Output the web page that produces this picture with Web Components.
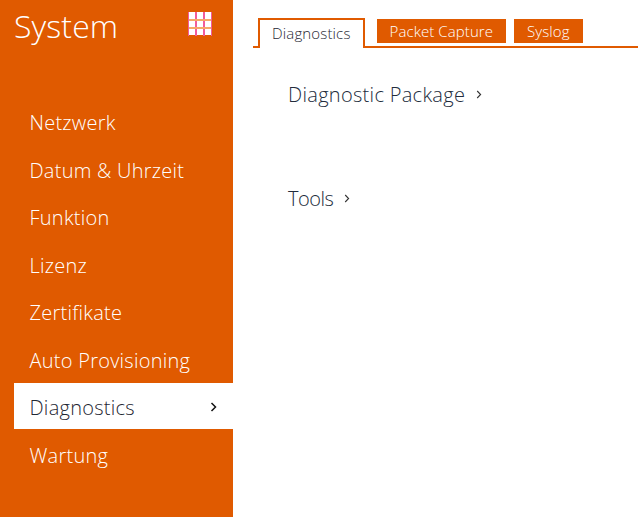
<!DOCTYPE html>
<html><head><meta charset="utf-8"><style>
html,body{margin:0;padding:0;height:100%;background:#fff;overflow:hidden}
body{font-family:"Open Sans","Noto Sans",sans-serif}
</style></head><body>
<template id="t-app"><style>
:host{display:flex;width:638px;height:517px}
main{flex:1;min-width:0;display:flex;flex-direction:column;padding:18px 0 0 20px}
.sections{display:flex;flex-direction:column;gap:80px;padding:34px 0 0 35px}
</style><slot name="side"></slot><main><slot name="tabs"></slot><div class="sections"><slot></slot></div></main></template>

<template id="t-side"><style>
:host{display:flex;flex-direction:column;width:233px;height:517px;background:#e05a00;box-sizing:border-box;padding:0 0 0 14px;color:#fff}
header{display:flex;justify-content:space-between;align-items:flex-start;height:89px;padding-right:21px}
h1{margin:0;font-size:32px;font-weight:300;line-height:40px;padding-top:6px;letter-spacing:.1px}
svg{margin-top:12px;display:block}
nav{display:flex;flex-direction:column;padding-top:10px}
</style><header><h1><slot name="title"></slot></h1>
<svg width="24" height="24" viewBox="0 0 24 24"><path d="M0 0V24M8 0V24M16 0V24M24 0V24" stroke="#f25c9a" stroke-width="2"/><path d="M1 8H23M1 16H23" stroke="#f6a868" stroke-width="2"/><path fill="#fff" d="M1 0h6v7H1zM9 0h6v7H9zM17 0h6v7h-6zM1 9h6v6H1zM9 9h6v6H9zM17 9h6v6h-6zM1 17h6v6H1zM9 17h6v6H9zM17 17h6v6h-6z"/></svg>
</header><nav><slot></slot></nav></template>

<template id="t-item"><style>
:host{display:flex;align-items:center;justify-content:space-between;height:47.5px;box-sizing:border-box;padding:0 16px 0 15.5px;font-size:20px;font-weight:300;color:#fff;letter-spacing:.25px}
:host([active]){background:#fff;color:#1f2733;height:46px;margin:-1px 0 2.5px;padding-top:2px}
svg{display:none}
:host([active]) svg{display:block;margin-top:-1px}
</style><span><slot></slot></span><svg width="7" height="10" viewBox="0 0 7 10"><path d="M1.5 1L5.5 5L1.5 9" fill="none" stroke="#111" stroke-width="1.5"/></svg></template>

<template id="t-tabs"><style>
:host{display:flex;align-items:flex-end;height:30px;box-sizing:border-box;border-bottom:2px solid #e05a00;padding-left:5px;gap:12px}
</style><slot></slot></template>

<template id="t-tab"><style>
:host{display:flex;align-items:center;justify-content:center;box-sizing:border-box;height:24px;margin-bottom:3px;padding:0 13px;background:#e05a00;color:#fff;font-size:15px;font-weight:300;margin-right:-4px;letter-spacing:.08px}
:host([active]){height:30px;margin:0 0 -2px;background:#fff;color:#1f2733;border:2px solid #e05a00;border-bottom:0;padding:0 12px 3px;margin-right:0;letter-spacing:.15px}
</style><slot></slot></template>

<template id="t-sec"><style>
:host{display:flex;align-items:center;gap:11px;height:24px;font-size:20px;font-weight:300;color:#222c3c;letter-spacing:.3px}
:host([tight]){letter-spacing:-.5px}
</style><span><slot></slot></span><svg width="6" height="9" viewBox="0 0 6 9"><path d="M1.2 1L4.6 4.5L1.2 8" fill="none" stroke="#333" stroke-width="1.1"/></svg></template>

<x-app>
<x-side slot="side"><span slot="title">System</span>
<x-item>Netzwerk</x-item><x-item>Datum &amp; Uhrzeit</x-item><x-item>Funktion</x-item><x-item>Lizenz</x-item><x-item>Zertifikate</x-item><x-item>Auto Provisioning</x-item><x-item active>Diagnostics</x-item><x-item>Wartung</x-item>
</x-side>
<x-tabs slot="tabs"><x-tab active>Diagnostics</x-tab><x-tab>Packet Capture</x-tab><x-tab>Syslog</x-tab></x-tabs>
<x-sec>Diagnostic Package</x-sec><x-sec tight>Tools</x-sec>
</x-app>
<script>
for(const [n,t] of [['x-app','t-app'],['x-side','t-side'],['x-item','t-item'],['x-tabs','t-tabs'],['x-tab','t-tab'],['x-sec','t-sec']]){
customElements.define(n,class extends HTMLElement{constructor(){super();this.attachShadow({mode:'open'}).appendChild(document.getElementById(t).content.cloneNode(true))}});
}
</script>
</body></html>
